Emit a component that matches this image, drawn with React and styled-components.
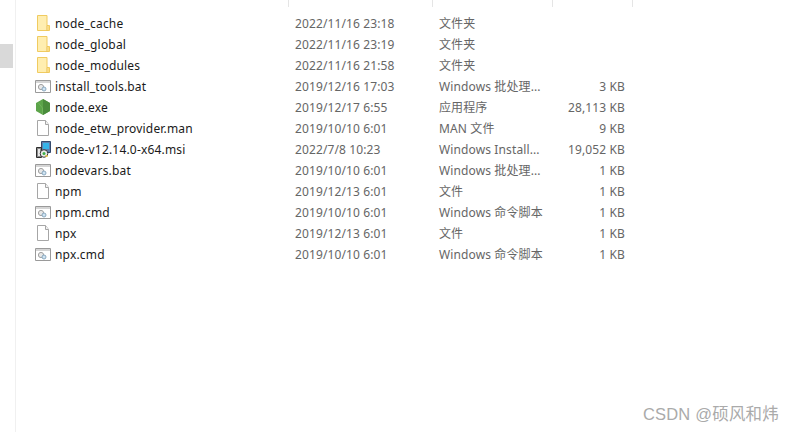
import React from "react";
import styled, { createGlobalStyle } from "styled-components";

const Global = createGlobalStyle`
  html, body { margin: 0; padding: 0; background: #fff; }
  body { font-family: "Noto Sans", "Noto Sans CJK SC", sans-serif; }
`;
const Page = styled.div`
  position: relative; display: flex; width: 795px; height: 432px; overflow: hidden; background: #fff;
`;
const Sidebar = styled.aside`
  width: 15px; height: 388px; border-right: 1px solid #f0f0f0; padding-top: 44px; flex: none;
`;
const SideItem = styled.div`
  width: 13px; height: 24px; background: #d9d9d9;
`;
const Main = styled.main`
  flex: 1; display: flex; flex-direction: column;
`;
const Header = styled.div`
  display: grid; grid-template-columns: 273px 144px 120px 80px; height: 7px; margin-bottom: 6px;
`;
const HeaderCell = styled.div`
  border-right: 1px solid #e5e5e5; box-sizing: border-box;
`;
const Rows = styled.div`
  display: flex; flex-direction: column;
`;
const Row = styled.div`
  display: grid; grid-template-columns: 19px 241px 144px 120px 66px; height: 21px; align-items: center;
  padding-left: 19px; font-size: 12px; line-height: 21px; white-space: nowrap;
`;
const IconCell = styled.div`
  display: flex; align-items: center; width: 16px; height: 21px;
  svg { display: block; }
`;
const Name = styled.div`
  color: #1a1a1a; padding-left: 1px; letter-spacing: 0.18px;
`;
const Meta = styled.div`
  color: #666; letter-spacing: 0.12px;
`;
const Size = styled.div`
  color: #666; text-align: right; letter-spacing: 0.12px;
`;
const Watermark = styled.div`
  position: absolute; right: 16px; top: 404px; font-size: 16.5px; letter-spacing: 0.2px; line-height: 21px; color: #aaa;
  font-family: "Liberation Sans", "Noto Sans CJK SC", sans-serif;
`;

const Folder = () => (
  <svg width="16" height="17" viewBox="0 0 16 17">
    <path d="M2.5.5h9.5v10h2.5v5h-12z" fill="#ffeeb0" stroke="#f0cb60" />
    <path d="M12 10.5v5" stroke="#e5bb4c" />
    <path d="M12.5 11h1.5v4h-1.5z" fill="#fbdc84" />
  </svg>
);
const Script = () => (
  <svg width="16" height="17" viewBox="0 0 16 17">
    <path d="M.5 2.5h15v12H.5z" fill="#fff" stroke="#9a9a9a" />
    <path d="M1 3h14v2H1z" fill="#d5d5d5" />
    <circle cx="6" cy="9" r="2.6" fill="#e8e8e8" stroke="#a0a0a0" />
    <circle cx="9" cy="11" r="2" fill="#cfe3f2" stroke="#8aa9bf" />
  </svg>
);
const Hex = () => (
  <svg width="16" height="17" viewBox="0 0 16 17">
    <path d="M8 0 15 4v8l-7 4-7-4V4z" fill="#5ca44a" />
    <path d="M8 0 15 4v8l-7 4z" fill="#4a8c3c" />
    <path d="M3.5 4 7.5 9v6" stroke="#6fb35a" fill="none" />
  </svg>
);
const Doc = () => (
  <svg width="16" height="17" viewBox="0 0 16 17">
    <path d="M2.5.5h8l3 4v11h-11z" fill="#fff" stroke="#a6a6a6" />
    <path d="M10.5.5v4h3" fill="#f2f2f2" stroke="#a6a6a6" />
  </svg>
);
const Msi = () => (
  <svg width="16" height="17" viewBox="0 0 16 17">
    <path d="M6.5.5h9v11h-9z" fill="#5f7fae" stroke="#33496b" />
    <path d="M8 2h6v6H8z" fill="#36b4ea" />
    <path d="M1.5 6.5h5v10h-5z" fill="#8a8a8a" stroke="#2e2e2e" />
    <path d="M3 8h2v7H3z" fill="#e8e8e8" />
    <circle cx="9" cy="12.5" r="3.8" fill="#eaeaea" stroke="#3a3a3a" />
    <circle cx="9" cy="12.5" r="1.5" fill="#3fae49" />
    <path d="M10.5 14h2v2h-2z" fill="#e0c040" />
  </svg>
);

const files = [
  { icon: Folder, name: "node_cache", date: "2022/11/16 23:18", type: "文件夹", size: "" },
  { icon: Folder, name: "node_global", date: "2022/11/16 23:19", type: "文件夹", size: "" },
  { icon: Folder, name: "node_modules", date: "2022/11/16 21:58", type: "文件夹", size: "" },
  { icon: Script, name: "install_tools.bat", date: "2019/12/16 17:03", type: "Windows 批处理...", size: "3 KB" },
  { icon: Hex, name: "node.exe", date: "2019/12/17 6:55", type: "应用程序", size: "28,113 KB" },
  { icon: Doc, name: "node_etw_provider.man", date: "2019/10/10 6:01", type: "MAN 文件", size: "9 KB" },
  { icon: Msi, name: "node-v12.14.0-x64.msi", date: "2022/7/8 10:23", type: "Windows Install...", size: "19,052 KB" },
  { icon: Script, name: "nodevars.bat", date: "2019/10/10 6:01", type: "Windows 批处理...", size: "1 KB" },
  { icon: Doc, name: "npm", date: "2019/12/13 6:01", type: "文件", size: "1 KB" },
  { icon: Script, name: "npm.cmd", date: "2019/10/10 6:01", type: "Windows 命令脚本", size: "1 KB" },
  { icon: Doc, name: "npx", date: "2019/12/13 6:01", type: "文件", size: "1 KB" },
  { icon: Script, name: "npx.cmd", date: "2019/10/10 6:01", type: "Windows 命令脚本", size: "1 KB" },
];

export default function App() {
  return (
    <Page>
      <Global />
      <Sidebar><SideItem /></Sidebar>
      <Main>
        <Header>
          <HeaderCell /><HeaderCell /><HeaderCell /><HeaderCell />
        </Header>
        <Rows>
          {files.map(f => (
            <Row key={f.name}>
              <IconCell><f.icon /></IconCell>
              <Name>{f.name}</Name>
              <Meta>{f.date}</Meta>
              <Meta>{f.type}</Meta>
              <Size>{f.size}</Size>
            </Row>
          ))}
        </Rows>
      </Main>
      <Watermark>CSDN @硕风和炜</Watermark>
    </Page>
  );
}
